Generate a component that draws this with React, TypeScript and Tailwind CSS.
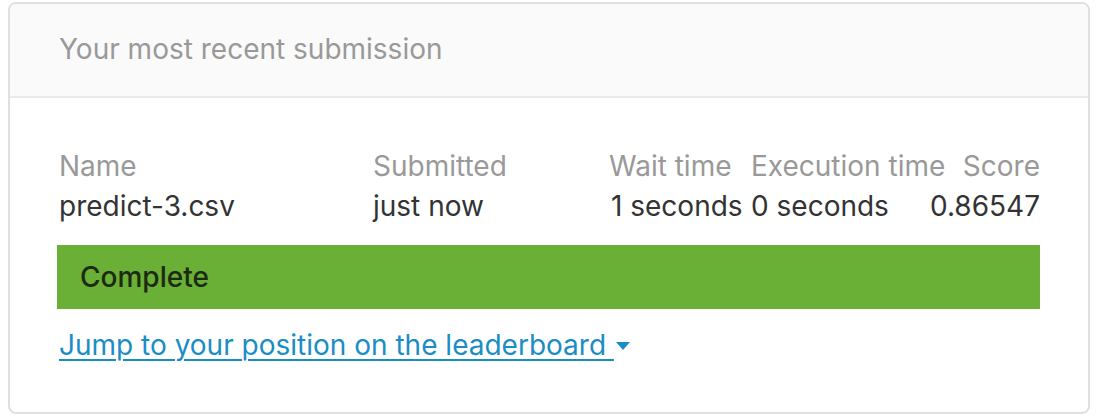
import { useState } from 'react';

const font = { fontFamily: 'Inter, "Liberation Sans", sans-serif' };

export default function App() {
    const [open, setOpen] = useState(false);

    const row = {
        name: 'predict-3.csv',
        submitted: 'just now',
        wait: '1 seconds',
        execution: '0 seconds',
        score: '0.86547'
    };

    return (
        <div className="w-[1100px] h-[420px] bg-white pt-[2px] pl-[8px]" style={font}>
            <div className="w-[1082px] h-[412px] border-2 border-[#e0e0e0] rounded-[8px] overflow-hidden flex flex-col">
                <div className="h-[94px] bg-[#fafafa] border-b-2 border-[#ebebeb] flex items-center pl-[49px] shrink-0">
                    <h2 className="text-[28px] text-[#999999] leading-none pb-[2px]">Your most recent submission</h2>
                </div>

                <div className="pl-[47px] pr-[48px] pt-[48px]">
                    <div className="grid grid-cols-[316px_236px_142px_172px_1fr] text-[28px] leading-[40px] whitespace-nowrap">
                        <span className="pl-[2px] text-[#999999]">Name</span>
                        <span className="text-[#999999]">Submitted</span>
                        <span className="text-[#999999]">Wait time</span>
                        <span className="text-[#999999]">Execution time</span>
                        <span className="text-[#999999] text-right">Score</span>

                        <span className="pl-[2px] text-[#333333]">{row.name}</span>
                        <span className="text-[#333333]">{row.submitted}</span>
                        <span className="text-[#333333] pl-[2px]">{row.wait}</span>
                        <span className="text-[#333333]">{row.execution}</span>
                        <span className="text-[#333333] text-right">{row.score}</span>
                    </div>

                    <div className="mt-[19px] h-[64px] bg-[#6aaf36] flex items-center pl-[23px]">
                        <span className="text-[28px] text-[#1c2a12] font-medium">Complete</span>
                    </div>

                    <button
                        type="button"
                        onClick={() => setOpen(!open)}
                        className="mt-[16px] flex items-center gap-[2px] text-[28px] leading-[40px] text-[#1b8dc5] pl-[2px]"
                    >
                        <span className="underline underline-offset-[4px] decoration-[2px]">Jump to your position on the leaderboard{'\u00a0'}</span>
                        <svg width="14" height="8" viewBox="0 0 14 8" className="mt-[2px]">
                            <path d="M0 0 L14 0 L7 8 Z" fill="#1b8dc5" />
                        </svg>
                    </button>
                </div>
            </div>
        </div>
    );
}
